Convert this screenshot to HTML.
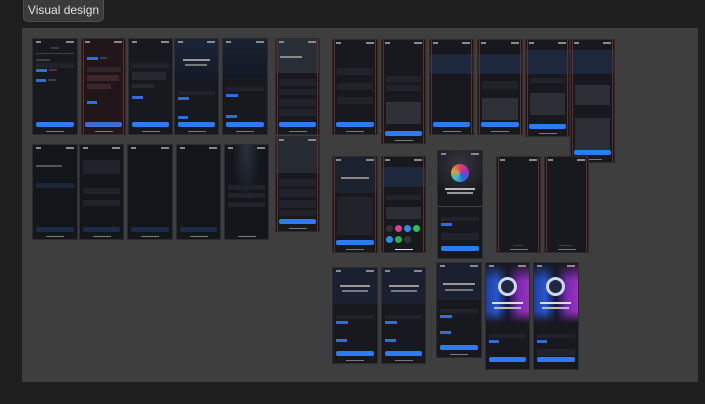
<!DOCTYPE html>
<html><head><meta charset="utf-8"><style>
*{margin:0;padding:0;box-sizing:border-box}
body{width:705px;height:404px;background:#1e1e1e;position:relative;overflow:hidden;font-family:"Liberation Sans",sans-serif}
.lbl{position:absolute;left:23px;top:0;width:81px;height:22px;background:#3b3b3b;border:1px solid #4d4d4d;border-top:none;border-radius:0 0 5px 5px;color:#e0e0e0;font-size:12px;line-height:21px;text-align:center;white-space:nowrap}
.frame{position:absolute;left:22px;top:28px;width:676px;height:354px;background:#3e3e3e}
.p{position:absolute;background:#17191e;overflow:hidden;box-shadow:0 0 0 1px #2c2c2c}
.p .sb{position:absolute;top:2px;left:3px;right:3px;height:2px;border-left:5px solid #8a8a8a;border-right:8px solid #8a8a8a}
.p .btn{position:absolute;left:3px;right:3px;bottom:7px;height:5px;background:#2b7cf3;border-radius:2px}
.p .hm{position:absolute;left:50%;margin-left:-9px;width:18px;bottom:2px;height:1.5px;background:#7a7a7a}
.p .r{position:absolute;top:0;bottom:0;left:1px;right:1px;border-left:1.5px solid #6e2a20;border-right:1.5px solid #6e2a20}
.p .ln{position:absolute;height:2px;background:#3c3f46}
.p .bb{position:absolute;height:3px;background:#2b6fd8}
.p .cd{position:absolute;background:#202329}
.dim .btn{background:#1c2c48}
</style></head><body>
<div class="lbl">Visual design</div>
<div class="frame"></div>

<div class="p" style="left:33px;top:39px;width:44px;height:95px"><div class="sb"></div><div class="ln" style="left:18px;top:8px;width:8px"></div><div class="ln" style="left:3px;top:14px;width:38px;height:1px"></div><div class="ln" style="left:3px;top:20px;width:14px"></div><div class="cd" style="left:3px;top:24px;width:38px;height:5px"></div><div class="bb" style="left:3px;top:30px;width:11px"></div><div class="ln" style="left:16px;top:30px;width:8px;background:#5a3030"></div><div class="bb" style="left:3px;top:40px;width:10px"></div><div class="ln" style="left:15px;top:40px;width:8px"></div><div class="btn"></div><div class="hm"></div></div>
<div class="p" style="left:82px;top:39px;width:43px;height:95px;background:#211619"><div class="r"></div><div class="sb"></div><div class="bb" style="left:5px;top:18px;width:11px"></div><div class="ln" style="left:18px;top:18px;width:7px"></div><div class="cd" style="left:5px;top:28px;width:34px;height:5px;background:#33232a"></div><div class="ln" style="left:5px;top:36px;width:32px;height:6px;background:#3e262c"></div><div class="ln" style="left:5px;top:45px;width:24px;height:5px;background:#3e262c"></div><div class="bb" style="left:5px;top:62px;width:10px"></div><div class="btn" style="background:#3c6fd4"></div><div class="hm"></div></div>
<div class="p" style="left:129px;top:39px;width:43px;height:95px"><div class="sb"></div><div class="cd" style="left:3px;top:24px;width:37px;height:5px"></div><div class="ln" style="left:3px;top:33px;width:34px;height:8px;background:#25282e"></div><div class="ln" style="left:3px;top:45px;width:22px;height:4px;background:#25282e"></div><div class="bb" style="left:3px;top:57px;width:11px"></div><div class="btn"></div><div class="hm"></div></div>
<div class="p" style="left:175px;top:39px;width:43px;height:95px"><div style="position:absolute;left:0;right:0;top:0;height:42px;background:linear-gradient(#1c2538,#141a26)"></div><div class="sb"></div><div class="ln" style="left:8px;top:20px;width:27px;background:#999"></div><div class="ln" style="left:10px;top:25px;width:22px;background:#777"></div><div class="cd" style="left:3px;top:52px;width:37px;height:4px"></div><div class="bb" style="left:3px;top:58px;width:11px"></div><div class="bb" style="left:3px;top:77px;width:10px"></div><div class="btn"></div><div class="hm"></div></div>
<div class="p" style="left:223px;top:39px;width:44px;height:95px"><div style="position:absolute;left:0;right:0;top:0;height:40px;background:linear-gradient(#1a2333,#131924)"></div><div class="sb"></div><div class="cd" style="left:3px;top:48px;width:38px;height:4px"></div><div class="bb" style="left:3px;top:55px;width:12px"></div><div class="bb" style="left:3px;top:76px;width:11px"></div><div class="btn"></div><div class="hm"></div></div>
<div class="p" style="left:276px;top:39px;width:43px;height:95px"><div style="position:absolute;left:0;right:0;top:0;height:34px;background:#2a2e36"></div><div class="r"></div><div class="sb"></div><div class="ln" style="left:4px;top:17px;width:22px;background:#888"></div><div class="cd" style="left:3px;top:40px;width:37px;height:7px"></div><div class="cd" style="left:3px;top:50px;width:37px;height:6px"></div><div class="cd" style="left:3px;top:60px;width:37px;height:7px"></div><div class="cd" style="left:3px;top:70px;width:37px;height:7px"></div><div class="btn"></div><div class="hm"></div></div>
<div class="p" style="left:276px;top:137px;width:43px;height:94px"><div style="position:absolute;left:0;right:0;top:0;height:36px;background:#262a32"></div><div class="r"></div><div class="sb"></div><div class="cd" style="left:3px;top:42px;width:37px;height:7px"></div><div class="cd" style="left:3px;top:52px;width:37px;height:8px"></div><div class="cd" style="left:3px;top:63px;width:37px;height:8px"></div><div class="cd" style="left:3px;top:73px;width:37px;height:6px"></div><div class="btn"></div><div class="hm"></div></div>

<div class="p dim" style="left:33px;top:145px;width:44px;height:94px;background:#13161b"><div class="sb"></div><div class="ln" style="left:3px;top:20px;width:26px;background:#555"></div><div class="cd" style="left:3px;top:38px;width:38px;height:5px;background:#1c2638"></div><div class="btn"></div><div class="hm"></div></div>
<div class="p dim" style="left:80px;top:145px;width:43px;height:94px;background:#13161b"><div class="sb"></div><div class="cd" style="left:3px;top:15px;width:37px;height:14px"></div><div class="cd" style="left:3px;top:43px;width:37px;height:6px"></div><div class="cd" style="left:3px;top:55px;width:37px;height:6px"></div><div class="btn"></div><div class="hm"></div></div>
<div class="p dim" style="left:128px;top:145px;width:44px;height:94px;background:#13161b"><div class="sb"></div><div class="btn"></div><div class="hm"></div></div>
<div class="p dim" style="left:177px;top:145px;width:43px;height:94px;background:#13161b"><div class="sb"></div><div class="btn"></div><div class="hm"></div></div>
<div class="p dim" style="left:225px;top:145px;width:43px;height:94px;background:radial-gradient(ellipse at 50% 0,#2a3240,#13161b 45%)"><div class="sb"></div><div class="cd" style="left:3px;top:40px;width:37px;height:5px"></div><div class="cd" style="left:3px;top:48px;width:37px;height:5px"></div><div class="cd" style="left:3px;top:57px;width:37px;height:5px"></div><div class="hm"></div></div>

<div class="p" style="left:333px;top:40px;width:44px;height:94px"><div class="r"></div><div class="sb"></div><div class="cd" style="left:4px;top:28px;width:36px;height:7px"></div><div class="cd" style="left:4px;top:43px;width:36px;height:7px"></div><div class="cd" style="left:4px;top:57px;width:36px;height:7px"></div><div class="btn"></div><div class="hm"></div></div>
<div class="p" style="left:382px;top:40px;width:43px;height:103px"><div class="r"></div><div class="sb"></div><div class="cd" style="left:4px;top:36px;width:35px;height:6px"></div><div class="cd" style="left:4px;top:45px;width:35px;height:6px"></div><div class="ln" style="left:4px;top:62px;width:35px;height:22px;background:#2e3138"></div><div class="btn"></div><div class="hm"></div></div>
<div class="p" style="left:430px;top:40px;width:43px;height:94px"><div style="position:absolute;left:0;right:0;top:14px;height:20px;background:#1d283c"></div><div class="r"></div><div class="sb"></div><div class="btn"></div><div class="hm"></div></div>
<div class="p" style="left:478px;top:40px;width:44px;height:94px"><div style="position:absolute;left:0;right:0;top:14px;height:20px;background:#1d283c"></div><div class="r"></div><div class="sb"></div><div class="cd" style="left:4px;top:41px;width:36px;height:8px"></div><div class="ln" style="left:4px;top:58px;width:36px;height:22px;background:#2e3138"></div><div class="btn"></div><div class="hm"></div></div>
<div class="p" style="left:526px;top:40px;width:43px;height:96px"><div style="position:absolute;left:0;right:0;top:10px;height:24px;background:#1d283c"></div><div class="r"></div><div class="sb"></div><div class="cd" style="left:4px;top:38px;width:35px;height:5px"></div><div class="ln" style="left:4px;top:53px;width:35px;height:22px;background:#2c2f36"></div><div class="btn"></div><div class="hm"></div></div>
<div class="p" style="left:571px;top:40px;width:43px;height:122px"><div style="position:absolute;left:0;right:0;top:10px;height:24px;background:#1d283c"></div><div class="r"></div><div class="sb"></div><div class="ln" style="left:4px;top:45px;width:35px;height:20px;background:#2c2f36"></div><div class="ln" style="left:4px;top:78px;width:35px;height:34px;background:#2c2f36"></div><div class="btn"></div><div class="hm"></div></div>

<div class="p" style="left:333px;top:157px;width:44px;height:95px"><div style="position:absolute;left:0;right:0;top:0;height:36px;background:#1b212d"></div><div class="r"></div><div class="sb"></div><div class="ln" style="left:8px;top:20px;width:28px;background:#888"></div><div class="cd" style="left:4px;top:40px;width:36px;height:38px"></div><div class="btn"></div><div class="hm"></div></div>
<div class="p" style="left:382px;top:157px;width:43px;height:95px"><div style="position:absolute;left:0;right:0;top:10px;height:20px;background:#1d283c"></div><div class="r"></div><div class="sb"></div><div class="cd" style="left:4px;top:38px;width:35px;height:5px"></div><div class="ln" style="left:4px;top:50px;width:35px;height:12px;background:#2c2f36"></div>
<div style="position:absolute;top:68px;left:4px;width:7px;height:7px;border-radius:50%;background:#333"></div><div style="position:absolute;top:68px;left:13px;width:7px;height:7px;border-radius:50%;background:#d8408a"></div><div style="position:absolute;top:68px;left:22px;width:7px;height:7px;border-radius:50%;background:#2b8cf0"></div><div style="position:absolute;top:68px;left:31px;width:7px;height:7px;border-radius:50%;background:#28c060"></div><div style="position:absolute;top:79px;left:4px;width:7px;height:7px;border-radius:50%;background:#2b8cf0"></div><div style="position:absolute;top:79px;left:13px;width:7px;height:7px;border-radius:50%;background:#28b050"></div><div style="position:absolute;top:79px;left:22px;width:7px;height:7px;border-radius:50%;background:#333"></div><div class="hm" style="background:#ddd"></div></div>
<div class="p" style="left:438px;top:151px;width:44px;height:107px"><div style="position:absolute;left:0;right:0;top:0;height:55px;background:radial-gradient(circle at 50% 25%,#36363f,#17191e 70%)"></div><div class="sb"></div><div style="position:absolute;left:13px;top:13px;width:18px;height:18px;border-radius:50%;background:conic-gradient(#e0406a,#a030c0,#3060e0,#30c0c0,#e0a030,#e0406a)"></div><div class="ln" style="left:7px;top:37px;width:30px;background:#bbb"></div><div class="ln" style="left:9px;top:41px;width:26px;background:#999"></div><div class="ln" style="left:0;top:55px;width:44px;height:1px;background:#444"></div><div class="cd" style="left:3px;top:66px;width:38px;height:4px"></div><div class="bb" style="left:3px;top:72px;width:11px"></div><div class="cd" style="left:3px;top:82px;width:38px;height:7px"></div><div class="btn"></div></div>
<div class="p" style="left:497px;top:157px;width:43px;height:95px"><div class="r"></div><div class="sb"></div><div class="ln" style="left:16px;top:88px;width:10px;height:1px"></div><div class="hm"></div></div>
<div class="p" style="left:545px;top:157px;width:43px;height:95px"><div class="r"></div><div class="sb"></div><div class="ln" style="left:14px;top:88px;width:14px;height:1px"></div><div class="hm"></div></div>

<div class="p" style="left:333px;top:268px;width:44px;height:95px"><div style="position:absolute;left:0;right:0;top:0;height:36px;background:#1a2030"></div><div class="sb"></div><div class="ln" style="left:7px;top:17px;width:30px;background:#999"></div><div class="ln" style="left:9px;top:22px;width:26px;background:#777"></div><div class="cd" style="left:3px;top:47px;width:38px;height:4px"></div><div class="bb" style="left:3px;top:53px;width:12px"></div><div class="bb" style="left:3px;top:71px;width:11px"></div><div class="btn"></div><div class="hm"></div></div>
<div class="p" style="left:382px;top:268px;width:43px;height:95px"><div style="position:absolute;left:0;right:0;top:0;height:36px;background:#1a2030"></div><div class="sb"></div><div class="ln" style="left:7px;top:17px;width:30px;background:#999"></div><div class="ln" style="left:9px;top:22px;width:26px;background:#777"></div><div class="cd" style="left:3px;top:47px;width:37px;height:4px"></div><div class="bb" style="left:3px;top:53px;width:12px"></div><div class="bb" style="left:3px;top:71px;width:11px"></div><div class="btn"></div><div class="hm"></div></div>
<div class="p" style="left:437px;top:263px;width:44px;height:94px"><div style="position:absolute;left:0;right:0;top:0;height:37px;background:#1a2030"></div><div class="sb"></div><div class="ln" style="left:6px;top:20px;width:32px;background:#999"></div><div class="ln" style="left:8px;top:26px;width:28px;background:#777"></div><div class="cd" style="left:3px;top:46px;width:38px;height:4px"></div><div class="bb" style="left:3px;top:52px;width:12px"></div><div class="bb" style="left:3px;top:68px;width:11px"></div><div class="btn"></div><div class="hm"></div></div>
<div class="p" style="left:486px;top:263px;width:43px;height:106px"><div style="position:absolute;left:0;right:0;top:0;height:60px;background:linear-gradient(90deg,#1d3fa0,#2a55d0 25%,#141a30 50%,#7a2ab0 75%,#9a30c0)"></div><div style="position:absolute;left:0;right:0;top:0;height:60px;background:linear-gradient(#17191e,transparent 30%,transparent 80%,#17191e)"></div><div class="sb"></div><div style="position:absolute;left:12px;top:14px;width:19px;height:19px;border-radius:50%;border:3px solid #cfd8f0;background:#222840"></div><div class="ln" style="left:6px;top:39px;width:31px;background:#ddd"></div><div class="ln" style="left:8px;top:44px;width:27px;background:#bbb"></div><div class="cd" style="left:3px;top:71px;width:37px;height:4px"></div><div class="bb" style="left:3px;top:77px;width:10px"></div><div class="btn"></div></div>
<div class="p" style="left:534px;top:263px;width:44px;height:106px"><div style="position:absolute;left:0;right:0;top:0;height:60px;background:linear-gradient(90deg,#1d3fa0,#2a55d0 25%,#141a30 50%,#7a2ab0 75%,#9a30c0)"></div><div style="position:absolute;left:0;right:0;top:0;height:60px;background:linear-gradient(#17191e,transparent 30%,transparent 80%,#17191e)"></div><div class="sb"></div><div style="position:absolute;left:12px;top:14px;width:19px;height:19px;border-radius:50%;border:3px solid #cfd8f0;background:#222840"></div><div class="ln" style="left:6px;top:39px;width:31px;background:#ddd"></div><div class="ln" style="left:8px;top:44px;width:27px;background:#bbb"></div><div class="cd" style="left:3px;top:71px;width:38px;height:4px"></div><div class="bb" style="left:3px;top:77px;width:10px"></div><div class="cd" style="left:3px;top:86px;width:38px;height:7px"></div><div class="btn"></div></div>
</body></html>
